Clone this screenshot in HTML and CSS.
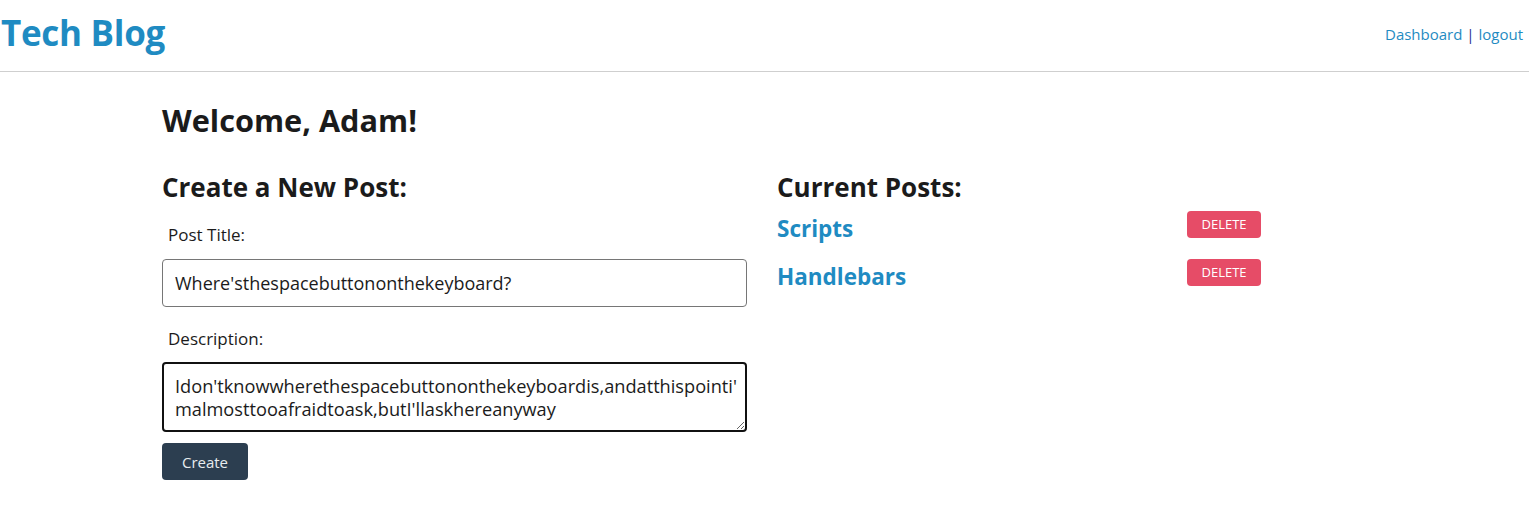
FILE: index.html
```html
<!DOCTYPE html>
<html lang="en">
<head>
<meta charset="utf-8">
<title>Tech Blog</title>
<link rel="stylesheet" href="styles.css">
</head>
<body>
<header class="site-header">
  <h1 class="logo">Tech Blog</h1>
  <nav class="nav"><a href="#">Dashboard</a> | <a href="#">logout</a></nav>
</header>
<main class="main">
  <h2 class="welcome">Welcome, Adam!</h2>
  <div class="columns">
    <section class="create">
      <h3 class="section-title">Create a New Post:</h3>
      <label class="field-label title-label" for="title">Post Title:</label>
      <input class="field-input" id="title" type="text" value="Where'sthespacebuttononthekeyboard?">
      <label class="field-label desc-label" for="desc">Description:</label>
      <textarea class="field-textarea" id="desc">Idon'tknowwherethespacebuttononthekeyboardis,andatthispointi'
malmosttooafraidtoask,butI'llaskhereanyway</textarea>
      <button class="btn-create" type="button">Create</button>
    </section>
    <section class="posts">
      <h3 class="section-title">Current Posts:</h3>
      <div class="post-row">
        <a class="post-link" href="#">Scripts</a>
        <button class="btn-delete" type="button">DELETE</button>
      </div>
      <div class="post-row">
        <a class="post-link" href="#">Handlebars</a>
        <button class="btn-delete" type="button">DELETE</button>
      </div>
    </section>
  </div>
</main>
</body>
</html>
```
FILE: styles.css
```css
* { box-sizing: border-box; }
body {
  margin: 0;
  font-family: "Open Sans", "Noto Sans", sans-serif;
  color: #1b1b1b;
  background: #fff;
}
.site-header {
  display: flex;
  justify-content: space-between;
  align-items: center;
  height: 72px;
  border-bottom: 1px solid #cfcfcf;
  padding: 0 6px 6px 1px;
}
.logo {
  margin: 0;
  font-size: 35px;
  font-weight: 700;
  color: #1f8bc2;
  letter-spacing: -0.3px;
}
.nav {
  font-size: 15px;
  color: #1f1f8f;
  padding-top: 2px;
}
.nav a { color: #1f8bc2; text-decoration: none; }
.main {
  width: 1205px;
  margin: 0 auto;
}
.welcome {
  margin: 28px 0 0;
  font-size: 30.7px;
  font-weight: 700;
  line-height: 40px;
}
.columns {
  display: grid;
  grid-template-columns: 585px 484px;
  column-gap: 30px;
  margin-top: 30px;
}
.section-title {
  margin: 0;
  font-size: 26px;
  font-weight: 700;
  line-height: 34px;
}
.create { display: flex; flex-direction: column; align-items: flex-start; }
.field-label {
  font-size: 17px;
  margin: 12px 0 0 6px;
  line-height: 22px;
}
.title-label { margin-top: 20px; }
.field-input {
  margin-top: 13px;
  width: 585px;
  height: 48px;
  border: 1px solid #767676;
  border-radius: 4px;
  padding: 0 12px;
  font-family: inherit;
  font-size: 18px;
  color: #1b1b1b;
}
.desc-label { margin-top: 21px; }
.field-textarea {
  margin-top: 12px;
  width: 585px;
  height: 70px;
  border: 2px solid #111;
  border-radius: 4px;
  padding: 11px 1px 2px 11px;
  font-family: inherit;
  font-size: 18.2px;
  line-height: 23px;
  color: #1b1b1b;
  resize: vertical;
  outline: none;
  overflow: hidden;
}
.btn-create {
  margin-top: 11px;
  width: 86px;
  height: 37px;
  border: none;
  border-radius: 4px;
  background: #2c3e50;
  color: #e8ecef;
  font-family: inherit;
  font-size: 15px;
}
.posts { display: flex; flex-direction: column; }
.post-row {
  display: flex;
  justify-content: space-between;
  align-items: center;
  height: 48px;
}
.post-link {
  font-size: 22.5px;
  font-weight: 700;
  color: #1f8bc2;
  text-decoration: none;
}
.btn-delete {
  width: 74px;
  height: 27px;
  margin-top: -8px;
  border: none;
  border-radius: 4px;
  background: #e64c67;
  color: #fff;
  font-family: inherit;
  font-size: 13px;
  padding: 0;
}
```
